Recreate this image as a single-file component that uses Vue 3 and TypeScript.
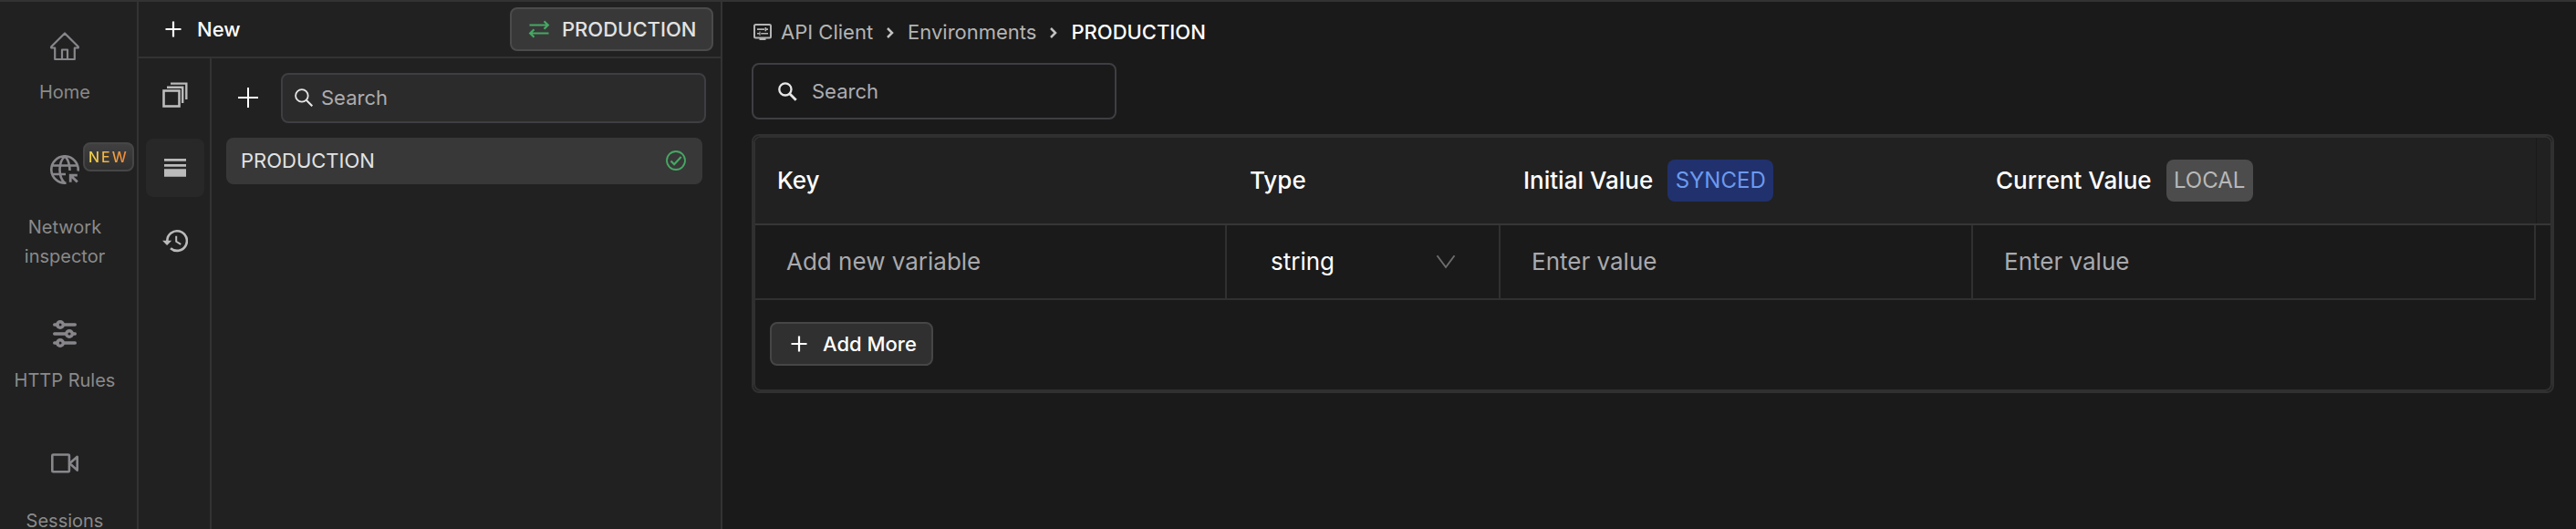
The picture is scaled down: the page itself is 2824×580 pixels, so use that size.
<script setup lang="ts">
interface NavItem {
  id: string
  label: string
  badge?: string
}

interface Column {
  id: string
  title: string
  tag?: string
}

const navItems: NavItem[] = [
  { id: 'home', label: 'Home' },
  { id: 'network', label: 'Network inspector', badge: 'NEW' },
  { id: 'rules', label: 'HTTP Rules' },
  { id: 'sessions', label: 'Sessions' },
]

const columns: Column[] = [
  { id: 'key', title: 'Key' },
  { id: 'type', title: 'Type' },
  { id: 'initial', title: 'Initial Value', tag: 'SYNCED' },
  { id: 'current', title: 'Current Value', tag: 'LOCAL' },
]

const environment = 'PRODUCTION'
</script>

<template>
  <div class="app">
    <nav class="sidebar">
      <a v-for="item in navItems" :key="item.id" class="nav-item" :class="item.id">
        <svg v-if="item.id === 'home'" class="nav-icon" viewBox="0 0 32 32">
          <path d="M1.200 16.200 16 1.500l14.800 14.700v1.300h-4V30H5.200V17.500h-4z M13 30V19.500h6V30" fill="none" stroke="currentColor" stroke-width="2.200" stroke-linejoin="round" />
        </svg>
        <svg v-else-if="item.id === 'network'" class="nav-icon" viewBox="0 0 32 32" fill="none" stroke="currentColor" stroke-width="2.600">
          <path d="M30.600 17.500A14.700 14.700 0 1 0 17.500 30.600M2 11.500h28M2 21h15M17.500 30.600h-1.500C12 27 10.500 22 10.500 16S12 5 16 1.400C20 5 21.500 10 21.500 17" />
          <path d="M20.800 20.800h9v2.800h-4.200l5.200 5-2 2-5.200-5.200v4.400h-2.800z" fill="currentColor" stroke="none" />
        </svg>
        <svg v-else-if="item.id === 'rules'" class="nav-icon" viewBox="0 0 32 32" fill="none" stroke="currentColor" stroke-width="3.400" stroke-linecap="round">
          <path d="M4.700 6h3.500M15 6h12.300M4.700 16h12.500M24.500 16h2.800M4.700 26h3.500M15 26h12.300" />
          <circle cx="11" cy="6" r="3.300" />
          <circle cx="21" cy="16" r="3.300" />
          <circle cx="11" cy="26" r="3.300" />
        </svg>
        <svg v-else class="nav-icon" viewBox="0 0 32 32" fill="none" stroke="currentColor" stroke-width="2.600" stroke-linejoin="round">
          <rect x="2.300" y="6.500" width="18.600" height="18.800" rx="1" />
          <path d="m21.400 16 8.300-7.200v14.800z" />
        </svg>
        <span v-if="item.badge" class="new-badge"><span>{{ item.badge }}</span></span>
        <span class="nav-label">{{ item.label }}</span>
      </a>
    </nav>

    <section class="panel">
      <header class="panel-header">
        <button class="new-btn">
          <svg width="18" height="18" viewBox="0 0 18 18"><path d="M9 .5v17M.5 9h17" stroke="currentColor" stroke-width="2.200" /></svg>
          <span>New</span>
        </button>
        <button class="env-btn">
          <svg width="24" height="20" viewBox="0 0 24 20" fill="none" stroke="currentColor" stroke-width="2.200">
            <path d="M1.500 5.500h20M17.500 1.300l4.300 4.200-4.300 4.200M22.500 14.500h-20M6.500 10.300l-4.300 4.200 4.300 4.200" />
          </svg>
          <span>{{ environment }}</span>
        </button>
      </header>
      <div class="panel-body">
        <div class="tabs">
          <div class="tab">
            <svg width="28" height="28" viewBox="0 0 28 28" fill="none" stroke="currentColor">
              <rect x="1.500" y="9.500" width="17" height="17" stroke-width="2.600" />
              <path d="M5 5.700h17.200V23M9 1.600h17.300V19" stroke-width="2.400" />
            </svg>
          </div>
          <div class="tab active">
            <svg width="24" height="20" viewBox="0 0 24 20" fill="currentColor">
              <path d="M0 0h24v2.700H0zM0 6h24v2.700H0zM0 11.300h24v8.500H0z" />
            </svg>
          </div>
          <div class="tab">
            <svg class="history" width="28" height="26" viewBox="0 0 28 26">
              <path d="M5.300 13A10.800 10.800 0 1 1 9 21.200" fill="none" stroke="currentColor" stroke-width="2.600" />
              <path d="M0 12.800h10.200L5.100 18z" fill="currentColor" />
              <path d="M15.200 7.800v6l5 3" fill="none" stroke="currentColor" stroke-width="2" />
            </svg>
          </div>
        </div>
        <div class="environments">
          <div class="toolbar">
            <svg class="add" width="22" height="22" viewBox="0 0 22 22"><path d="M11 0v22M0 11h22" stroke="currentColor" stroke-width="2" /></svg>
            <label class="search small">
              <svg width="20" height="20" viewBox="0 0 20 20" fill="none" stroke="currentColor" stroke-width="1.800">
                <circle cx="7.900" cy="7.900" r="6.800" /><path d="m12.800 12.800 6.500 6.500" stroke-width="2.100" />
              </svg>
              <span>Search</span>
            </label>
          </div>
          <div class="env-row">
            <span>{{ environment }}</span>
            <svg width="22" height="22" viewBox="0 0 22 22" fill="none" stroke="currentColor">
              <circle cx="11" cy="11" r="10" stroke-width="1.800" />
              <path d="m5.500 11.500 3.600 3.700 7.600-8.200" stroke-width="2.200" />
            </svg>
          </div>
        </div>
      </div>
    </section>

    <main class="main">
      <div class="breadcrumb">
        <svg class="crumb-icon" width="20" height="18" viewBox="0 0 20 18">
          <rect x="1" y="1" width="18" height="14.500" rx="1.500" fill="none" stroke="currentColor" stroke-width="2" />
          <path d="M6.500 15h7v3h-7zM4 5.300h8v1.700H4zM8.200 10h7.800v1.600H8.200zM12.500 4h1.600v4.300h-1.600zM14 5.300h2v1.700h-2zM4 10h2.500V8.600H7.500v4.300H6.500V11.600H4z" fill="currentColor" />
        </svg>
        <span class="crumb api">API Client</span>
        <svg class="sep" width="10" height="14" viewBox="0 0 10 14"><path d="m2 2 5 5-5 5" /></svg>
        <span class="crumb">Environments</span>
        <svg class="sep" width="10" height="14" viewBox="0 0 10 14"><path d="m2 2 5 5-5 5" /></svg>
        <span class="crumb current">{{ environment }}</span>
      </div>

      <label class="search large">
        <svg width="21" height="21" viewBox="0 0 21 21" fill="none" stroke="currentColor" stroke-width="2.300">
          <circle cx="7.900" cy="7.900" r="6.600" /><path d="m12.700 12.700 7 7" stroke-width="2.800" />
        </svg>
        <span>Search</span>
      </label>

      <div class="table-frame">
        <div class="table">
          <div class="row head">
            <div v-for="column in columns" :key="column.id" class="cell">
              <span>{{ column.title }}</span>
              <span v-if="column.tag" class="tag" :class="column.tag.toLowerCase()">{{ column.tag }}</span>
            </div>
            <div class="gutter"></div>
          </div>
          <div class="row body">
            <div class="cell key">Add new variable</div>
            <div class="cell type">
              <span>string</span>
              <svg width="22" height="16" viewBox="0 0 22 16"><path d="m1.500 1.300 9.500 12.700L20.500 1.300" fill="none" stroke="currentColor" stroke-width="1.900" /></svg>
            </div>
            <div class="cell">Enter value</div>
            <div class="cell">Enter value</div>
          </div>
          <button class="add-more">
            <svg width="18" height="18" viewBox="0 0 18 18"><path d="M9 .5v17M.5 9h17" stroke="currentColor" stroke-width="2.200" /></svg>
            <span>Add More</span>
          </button>
        </div>
      </div>
    </main>
  </div>
</template>

<style>
body {
  margin: 0;
  overflow: hidden;
  background: #1a1a1a;
}
</style>

<style scoped>
* {
  box-sizing: border-box;
}

.app {
  display: flex;
  height: 580px;
  overflow: hidden;
  border-top: 2px solid #333;
  background: #1a1a1a;
  color: #fff;
  font: 400 22px/32px Inter, "Liberation Sans", sans-serif;
}

svg {
  display: block;
  flex: none;
}

button {
  display: flex;
  align-items: center;
  margin: 0;
  padding: 0;
  border: 0;
  background: none;
  color: #fff;
  font: inherit;
  font-weight: 500;
}

.sidebar {
  display: flex;
  flex: none;
  flex-direction: column;
  gap: 53px;
  width: 152px;
  padding-top: 33px;
  border-right: 2px solid #333;
  background: #212121;
}

.nav-item {
  position: relative;
  display: flex;
  flex: none;
  flex-direction: column;
  align-items: center;
  gap: 18px;
  padding-right: 8px;
  color: #8a8a8a;
  font-size: 20px;
  text-align: center;
}

.nav-item.network {
  gap: 31px;
}

.nav-item.sessions {
  gap: 38px;
  padding-top: 6px;
  line-height: 18px;
}

.nav-item.rules {
  gap: 19px;
}

.nav-icon {
  width: 32px;
  height: 32px;
  color: #88868b;
}

.nav-label {
  max-width: 120px;
}

.new-badge {
  position: absolute;
  top: -14px;
  left: 91px;
  width: 56px;
  height: 32px;
  padding-left: 4px;
  border: 2px solid #464646;
  border-radius: 8px;
  background: linear-gradient(#404040, #2f2f2f);
  font-size: 16px;
  font-weight: 500;
  line-height: 28px;
  letter-spacing: 2px;
  text-align: left;
}

.new-badge span {
  display: inline-block;
  background: linear-gradient(90deg, #f5d94a, #f0823a);
  background-clip: text;
  color: transparent;
}

.panel {
  display: flex;
  flex: none;
  flex-direction: column;
  width: 640px;
  border-right: 2px solid #333;
  background: #212121;
}

.panel-header {
  display: flex;
  align-items: center;
  justify-content: space-between;
  height: 62px;
  padding: 0 8px 0 29px;
  border-bottom: 2px solid #333;
}

.new-btn {
  gap: 17px;
}

.env-btn {
  gap: 13px;
  width: 223px;
  height: 48px;
  padding-left: 18px;
  border: 2px solid #4b4b4b;
  border-radius: 8px;
  background: #383838;
  color: #e2e2e2;
}

.env-btn svg,
.env-row svg {
  color: #46a863;
}

.panel-body {
  display: flex;
  flex: 1;
}

.tabs {
  display: flex;
  flex: none;
  flex-direction: column;
  gap: 16px;
  width: 80px;
  padding: 8px 6px 0 8px;
  border-right: 2px solid #333;
  color: #bbb;
}

.tab {
  display: flex;
  align-items: center;
  justify-content: center;
  width: 64px;
  height: 64px;
  border-radius: 8px;
}

.tab.active {
  background: #282828;
}

.history {
  margin-right: 1px;
}

.environments {
  flex: 1;
  padding: 16px 16px 0;
}

.toolbar {
  display: flex;
  align-items: center;
  gap: 25px;
  padding-left: 13px;
}

.toolbar .add {
  margin-bottom: 1px;
}

.search {
  display: flex;
  align-items: center;
  border: 2px solid #3e3e43;
  border-radius: 8px;
  color: #acacb0;
}

.search svg {
  color: #e6e6e6;
}

.search.small {
  gap: 9px;
  width: 466px;
  height: 55px;
  padding: 0 0 1px 13px;
  background: #2b2b2b;
}

.env-row {
  display: flex;
  align-items: center;
  justify-content: space-between;
  width: 522px;
  height: 51px;
  margin-top: 16px;
  padding: 0 18px 1px 16px;
  border-radius: 8px;
  background: #383838;
  color: #e2e2e2;
}

.main {
  flex: 1;
  padding: 17px 24px 0 32px;
}

.breadcrumb {
  display: flex;
  align-items: center;
  height: 32px;
  color: #b4b4b4;
}

.crumb-icon {
  margin-left: 2px;
}

.api {
  margin-left: 10px;
}

.sep {
  margin: 2px 14px 0 14px;
  fill: none;
  stroke: #c2c2c2;
  stroke-width: 2.500px;
}

.crumb.current {
  color: #fff;
  font-weight: 500;
}

.search.large {
  gap: 16px;
  width: 400px;
  height: 62px;
  margin-top: 18px;
  padding-left: 27px;
}

.table-frame {
  width: 1976px;
  height: 284px;
  margin-top: 16px;
  border: 2px solid #303030;
  border-radius: 8px;
}

.table {
  height: 280px;
  overflow: hidden;
  border: 2px solid #303030;
  border-radius: 8px;
  font-size: 26px;
}

.row {
  display: grid;
  grid-template-columns: 517px 300px 518px 617px 16px;
}

.cell {
  display: flex;
  align-items: center;
}

.head {
  height: 96px;
  border-bottom: 2px solid #363636;
  background: #212121;
  font-weight: 500;
}

.head .cell {
  padding-left: 25px;
}

.head .cell:first-child {
  padding-left: 24px;
}

.gutter {
  border-left: 1px solid #1a1a1a;
}

.tag {
  display: flex;
  align-items: center;
  justify-content: center;
  height: 46px;
  margin-left: 16px;
  border-radius: 8px;
  font-size: 24px;
  font-weight: 400;
}

.tag.synced {
  width: 116px;
  background: #21316d;
  color: #6c9aee;
}

.tag.local {
  width: 95px;
  background: #4c4c4c;
  color: #b8b8b8;
}

.body {
  height: 82px;
  color: #a9a9ad;
}

.body .cell {
  padding-left: 34px;
  border-right: 2px solid #303030;
  border-bottom: 2px solid #303030;
}

.body .cell.type {
  justify-content: space-between;
  padding: 0 47px 0 48px;
  color: #fff;
}

.type svg {
  color: #6d6d6d;
}

.add-more {
  gap: 17px;
  width: 179px;
  height: 48px;
  margin: 24px 0 0 16px;
  padding-left: 21px;
  border: 2px solid #464646;
  border-radius: 8px;
  background: #303030;
  font-size: 22px;
}
</style>
